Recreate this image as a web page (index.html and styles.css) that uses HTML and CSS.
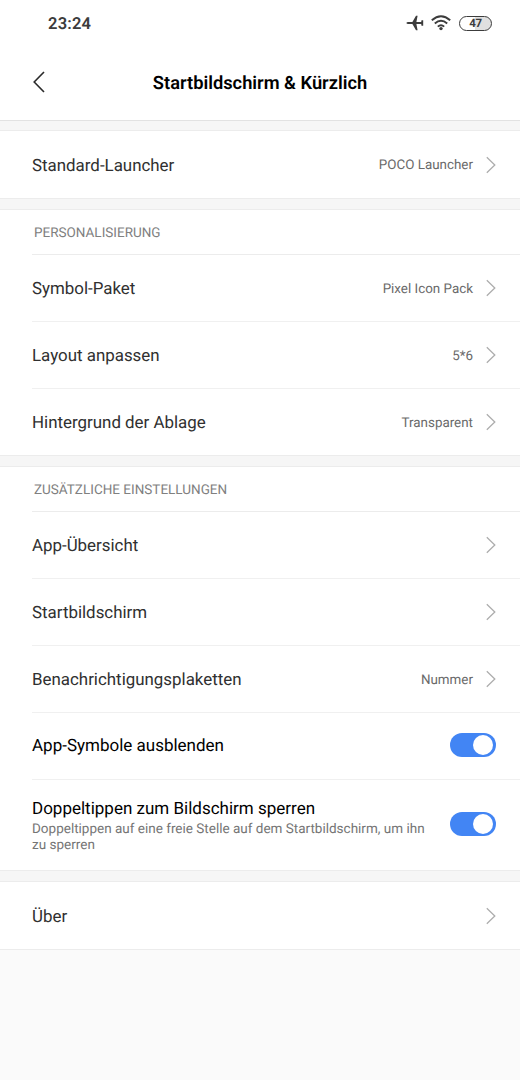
FILE: index.html
```html
<!DOCTYPE html>
<html lang="de">
<head>
  <meta charset="utf-8"/>
  <title>Startbildschirm &amp; Kürzlich</title>
  <link rel="stylesheet" href="styles.css">
</head>
<body>
  <svg class="hidden">
    <symbol id="chevron" viewBox="0 0 10 18">
      <path d="M0.8 1.2 L8.8 9 L0.8 16.8" fill="none" stroke="currentColor" stroke-width="1.3"/>
    </symbol>
  </svg>

  <!-- Status bar -->
  <div class="statusbar">
    <span class="clock">23:24</span>
    <div class="status-icons">
      <svg class="plane" viewBox="0 0 18 16">
        <path d="M0.4 8 Q0.6 7 2.2 7 H6.4 L10 0.7 H11.6 L10.4 7 H15.2 L15.5 5.2 H17.2 V10.8 H15.5 L15.2 9 H10.4 L11.6 15.3 H10 L6.4 9 H2.2 Q0.6 9 0.4 8 Z"/>
      </svg>
      <svg class="wifi" viewBox="0 0 20 16">
        <path d="M0.8 5.3 Q10 -2.7 19.2 5.3 M3.8 8.5 Q10 3 16.2 8.5 M6.8 11.6 Q10 8.7 13.2 11.6"/>
        <circle cx="10" cy="13.6" r="1.7"/>
      </svg>
      <div class="battery"><span>47</span></div>
    </div>
  </div>

  <div class="titlebar">
    <svg class="back" viewBox="0 0 12 22"><path d="M11 1 L1.2 11 L11 21"/></svg>
    <h1>Startbildschirm &amp; Kürzlich</h1>
  </div>

  <div class="card">
    <div class="row single">
      <span class="label">Standard-Launcher</span>
      <span class="value">POCO Launcher</span>
      <svg class="chevron"><use href="#chevron"/></svg>
    </div>
  </div>

  <div class="card">
    <h2>Personalisierung</h2>
    <div class="row">
      <span class="label">Symbol-Paket</span>
      <span class="value">Pixel Icon Pack</span>
      <svg class="chevron"><use href="#chevron"/></svg>
    </div>
    <div class="row">
      <span class="label">Layout anpassen</span>
      <span class="value">5*6</span>
      <svg class="chevron"><use href="#chevron"/></svg>
    </div>
    <div class="row">
      <span class="label">Hintergrund der Ablage</span>
      <span class="value">Transparent</span>
      <svg class="chevron"><use href="#chevron"/></svg>
    </div>
  </div>

  <div class="card">
    <h2>Zusätzliche Einstellungen</h2>
    <div class="row">
      <span class="label">App-Übersicht</span>
      <svg class="chevron"><use href="#chevron"/></svg>
    </div>
    <div class="row">
      <span class="label">Startbildschirm</span>
      <svg class="chevron"><use href="#chevron"/></svg>
    </div>
    <div class="row">
      <span class="label">Benachrichtigungsplaketten</span>
      <span class="value">Nummer</span>
      <svg class="chevron"><use href="#chevron"/></svg>
    </div>
    <div class="row">
      <span class="label dark">App-Symbole ausblenden</span>
      <div class="toggle"></div>
    </div>
    <div class="row tall">
      <div class="label dark">
        Doppeltippen zum Bildschirm sperren
        <p>Doppeltippen auf eine freie Stelle auf dem Startbildschirm, um ihn zu sperren</p>
      </div>
      <div class="toggle"></div>
    </div>
  </div>

  <div class="card">
    <div class="row single">
      <span class="label">Über</span>
      <svg class="chevron"><use href="#chevron"/></svg>
    </div>
  </div>
  <div class="rest"></div>
</body>
</html>
```

FILE: styles.css
```css
body {
  margin: 0;
  height: 1080px;
  display: flex;
  flex-direction: column;
  background: #f6f6f6;
  font-family: Roboto, sans-serif;
  text-rendering: geometricPrecision;
  overflow: hidden;
}
.hidden {
  display: none;
}

/* Status bar */
.statusbar {
  height: 46px;
  padding: 0 28px 0 48px;
  display: flex;
  align-items: center;
  justify-content: space-between;
  background: #fff;
  color: #3c3c3c;
}
.clock {
  padding-top: 2px;
  font-size: 16.5px;
  font-weight: 600;
  letter-spacing: 0.2px;
}
.status-icons {
  display: flex;
  align-items: center;
}
.plane {
  width: 18px;
  height: 16px;
  margin-right: 7px;
  fill: #3c3c3c;
}
.wifi {
  width: 20px;
  height: 16px;
  margin-right: 8px;
  fill: #3c3c3c;
}
.wifi path {
  fill: none;
  stroke: #3c3c3c;
  stroke-width: 1.9;
}
.battery {
  box-sizing: border-box;
  width: 33px;
  height: 15px;
  border: 1.5px solid #3c3c3c;
  border-radius: 8px;
  background: linear-gradient(90deg, #fff 48%, #e0e0e0 48%);
  font-size: 11.5px;
  font-weight: 700;
  line-height: 13px;
  letter-spacing: -0.3px;
  text-align: center;
}

/* Title */
.titlebar {
  height: 74px;
  padding: 0 33px;
  display: grid;
  grid-template-columns: 12px 1fr 12px;
  align-items: center;
  background: #fff;
  border-bottom: 1px solid #e2e2e2;
}
.back {
  width: 12px;
  height: 22px;
  margin-bottom: 2px;
  fill: none;
  stroke: #2a2a2a;
  stroke-width: 1.6;
}
h1 {
  margin: 0;
  font-size: 18.3px;
  font-weight: 600;
  text-align: center;
  color: #000;
}

/* Settings groups */
.card {
  margin-top: 10px;
  background: #fff;
  border-top: 1px solid #ececec;
  border-bottom: 1px solid #ececec;
}
.titlebar + .card {
  margin-top: 9px;
}
h2 {
  margin: 0 0 0 32px;
  padding-left: 2px;
  height: 44px;
  line-height: 47px;
  border-bottom: 1px solid #ececec;
  font-size: 13.5px;
  font-weight: 400;
  text-transform: uppercase;
  color: #808080;
}
.row {
  height: 66px;
  margin-left: 32px;
  padding-right: 24px;
  display: flex;
  align-items: center;
  border-bottom: 1px solid #f0f0f0;
}
.row:last-child {
  border-bottom: none;
}
.single {
  height: 67px;
}
.tall {
  height: 90px;
}
.label {
  flex: 1;
  padding-top: 2px;
  font-size: 16.9px;
  line-height: 22px;
  color: #303030;
}
.dark {
  padding-top: 0;
  font-size: 17px;
  color: #000;
}
.tall .label {
  line-height: 23px;
}
.label p {
  margin: 0 0 -1px;
  font-size: 13.5px;
  line-height: 16px;
  color: #757575;
}
.value {
  padding-top: 2px;
  font-size: 13.4px;
  color: #6a6a6a;
}
.chevron {
  width: 10px;
  height: 18px;
  margin-left: 13px;
  color: #adadad;
}
.toggle {
  box-sizing: border-box;
  width: 46px;
  height: 24px;
  margin: 0 0 2px 20px;
  padding: 2px 3px;
  border-radius: 12px;
  background: #4285f4;
}
.toggle::after {
  content: "";
  display: block;
  width: 20px;
  height: 20px;
  margin-left: auto;
  border-radius: 50%;
  background: #fff;
}
.rest {
  flex: 1;
  background: #fafafa;
}
```
